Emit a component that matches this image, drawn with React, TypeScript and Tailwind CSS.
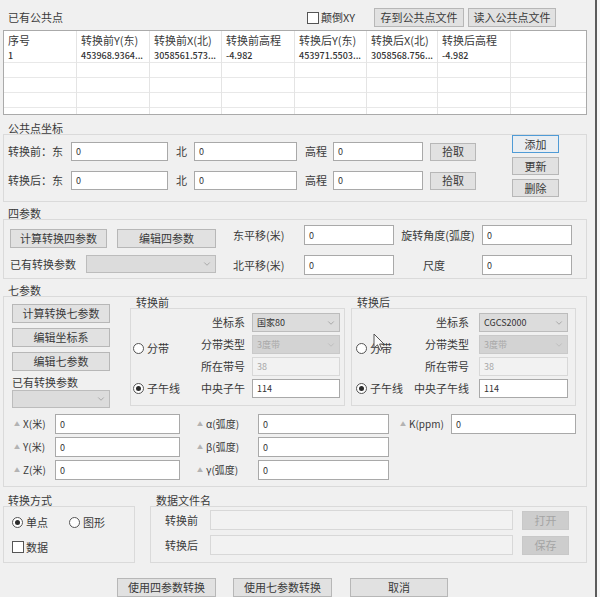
import React from 'react';
import clsx from 'clsx';
import { ChevronDown } from 'lucide-react';

type Kids = { className?: string; children?: React.ReactNode };

function Btn({ className, children, primary, disabled }: Kids & { primary?: boolean; disabled?: boolean }) {
  return (
    <div
      className={clsx(
        'flex shrink-0 items-center justify-center border text-[11px] leading-none',
        primary && 'border-[#4f9bd6] bg-[#eaeef2] text-[#3a3a3a]',
        disabled && 'border-[#c8c8c8] bg-[#cdcdcd] text-[#a4a4a4]',
        !primary && !disabled && 'border-[#b7b7b7] bg-[#e1e1e1] text-[#3a3a3a]',
        className,
      )}
    >
      {children}
    </div>
  );
}

function Field({ className, value = '0', disabled }: { className?: string; value?: string; disabled?: boolean }) {
  return (
    <div
      className={clsx(
        'flex shrink-0 items-center border pl-[4px] text-[9px] leading-none',
        disabled ? 'border-[#d8d8d8] bg-[#f2f2f2] text-[#a9a9a9]' : 'border-[#a9a9a9] bg-white text-[#333]',
        className,
      )}
    >
      {value}
    </div>
  );
}

function Combo({ className, value = '', disabled }: { className?: string; value?: string; disabled?: boolean }) {
  return (
    <div
      className={clsx(
        'flex shrink-0 items-center justify-between border pl-[4px] pr-[3px] text-[9px] leading-none',
        disabled ? 'border-[#c9c9c9] bg-[#d3d3d3] text-[#a8a8a8]' : 'border-[#bcbcbc] bg-[#dcdcdc] text-[#333]',
        className,
      )}
    >
      <span>{value}</span>
      <ChevronDown size={10} strokeWidth={1.5} color={disabled ? '#b0b0b0' : '#8a8a8a'} />
    </div>
  );
}

function Radio({ label, checked, className }: { label: string; checked?: boolean; className?: string }) {
  return (
    <div className={clsx('flex items-center gap-[3px] text-[11px] leading-none', className)}>
      <span className="flex h-[11px] w-[11px] items-center justify-center rounded-full border border-[#555] bg-white">
        {checked && <span className="h-[5px] w-[5px] rounded-full bg-[#2b2b2b]" />}
      </span>
      <span>{label}</span>
    </div>
  );
}

function Check({ label, className }: { label: string; className?: string }) {
  return (
    <div className={clsx('flex items-center gap-[2px] text-[11px] leading-none', className)}>
      <span className="h-[12px] w-[12px] border border-[#555] bg-white" />
      <span>{label}</span>
    </div>
  );
}

function Delta({ children }: Kids) {
  return (
    <span className="flex items-center text-[10px] leading-none">
      <span className="mr-[3px] text-[6px] text-[#b3b3b3]">▲</span>
      {children}
    </span>
  );
}

const COLS = [
  { w: 'w-[73px]', head: '序号', val: '1' },
  { w: 'w-[73px]', head: '转换前Y(东)', val: '453968.9364...' },
  { w: 'w-[72px]', head: '转换前X(北)', val: '3058561.573...' },
  { w: 'w-[73px]', head: '转换前高程', val: '-4.982' },
  { w: 'w-[72px]', head: '转换后Y(东)', val: '453971.5503...' },
  { w: 'w-[71px]', head: '转换后X(北)', val: '3058568.756...' },
  { w: 'w-[73px]', head: '转换后高程', val: '-4.982' },
  { w: 'flex-1', head: '', val: '' },
];

function PointTable() {
  return (
    <div className="ml-[3px] mt-[3px] flex h-[85px] w-[584px] border border-[#aaa] bg-white">
      {COLS.map((c, i) => (
        <div key={i} className={clsx('flex h-full flex-col', c.w, i < COLS.length - 1 && 'border-r border-[#e4e4e4]')}>
          <div className="flex h-[18px] items-center pl-[4px] text-[11px] leading-none">{c.head}</div>
          <div className="flex h-[14px] items-center border-b border-[#e8e8e8] pl-[4px] text-[9px] font-medium leading-none text-[#333]">
            {c.val}
          </div>
          <div className="h-[15px] border-b border-[#e8e8e8]" />
          <div className="h-[15px] border-b border-[#e8e8e8]" />
          <div className="h-[15px] border-b border-[#e8e8e8]" />
        </div>
      ))}
    </div>
  );
}

function GroupLabel({ children, className }: Kids) {
  return <div className={clsx('h-[12px] text-[11px] leading-[12px]', className)}>{children}</div>;
}

function CoordRow({ label }: { label: string }) {
  return (
    <div className="flex h-[19px] items-center text-[11px] leading-none">
      <span className="w-[63px]">{label}</span>
      <Field className="h-[19px] w-[97px]" />
      <span className="w-[26px] pl-[8px]">北</span>
      <Field className="h-[19px] w-[103px]" />
      <span className="w-[36px] pl-[8px]">高程</span>
      <Field className="h-[19px] w-[90px]" />
      <Btn className="ml-[7px] h-[18px] w-[46px]">拾取</Btn>
    </div>
  );
}

function SystemBox({
  title,
  grid,
  labelW,
  className,
  meridian,
  system,
}: {
  title: string;
  grid: string;
  labelW: string;
  className: string;
  meridian: string;
  system: string;
}) {
  const lab = clsx('flex h-[19px] items-center justify-end text-[11px] leading-none', labelW);
  return (
    <div className={className}>
      <div className="h-[11px] pl-[6px] text-[11px] leading-[11px]">{title}</div>
      <div className="h-[98px] border border-[#dadada]">
        <div className={clsx('grid gap-y-[3px] pt-[4px]', grid)}>
          <div />
          <div className={lab}>坐标系</div>
          <Combo className="h-[19px]" value={system} />

          <Radio label="分带" className="self-end" />
          <div className={lab}>分带类型</div>
          <Combo className="h-[19px]" value="3度带" disabled />

          <div />
          <div className={lab}>所在带号</div>
          <Field className="h-[19px]" value="38" disabled />

          <Radio label="子午线" checked className="self-center" />
          <div className={lab}>{meridian}</div>
          <Field className="h-[19px]" value="114" />
        </div>
      </div>
    </div>
  );
}

function Cursor() {
  return (
    <svg className="pointer-events-none absolute left-[373px] top-[333px]" width="14" height="20" viewBox="0 0 14 20">
      <path d="M1 1 L1 15 L4.5 11.8 L7 17.5 L9 16.6 L6.6 11 L11 11 Z" fill="#fafafa" stroke="#555" strokeWidth="1" />
    </svg>
  );
}

export default function App() {
  return (
    <div className="relative flex h-[597px] w-[600px] overflow-hidden bg-[#f7f7f7] font-['Noto_Sans_CJK_SC','Microsoft_YaHei',sans-serif] text-[#3a3a3a]">
      <div className="flex h-full w-[597px] shrink-0 flex-col border-r-[2px] border-[#5c5c5c] bg-[#f0f0f0]">
        {/* 已有公共点 */}
        <div className="mt-[8px] flex h-[19px] items-center">
          <span className="w-[307px] pl-[8px] text-[11px] leading-none">已有公共点</span>
          <Check label="颠倒XY" className="w-[67px]" />
          <Btn className="h-[19px] w-[90px]">存到公共点文件</Btn>
          <Btn className="ml-[4px] h-[19px] w-[88px]">读入公共点文件</Btn>
        </div>
        <PointTable />

        {/* 公共点坐标 */}
        <GroupLabel className="ml-[8px] mt-[7px]">公共点坐标</GroupLabel>
        <div className="ml-[3px] flex h-[68px] w-[584px] border border-[#dadada]">
          <div className="flex flex-col gap-[10px] pl-[4px] pt-[7px]">
            <CoordRow label="转换前：东" />
            <CoordRow label="转换后：东" />
          </div>
          <div className="ml-[36px] flex flex-col gap-[4px] pt-[0px]">
            <Btn primary className="h-[18px] w-[47px]">添加</Btn>
            <Btn className="h-[18px] w-[47px]">更新</Btn>
            <Btn className="h-[18px] w-[47px]">删除</Btn>
          </div>
        </div>

        {/* 四参数 */}
        <GroupLabel className="ml-[8px] mt-[5px]">四参数</GroupLabel>
        <div className="ml-[3px] flex h-[60px] w-[584px] border border-[#dadada]">
          <div className="flex flex-col pl-[6px] pt-[9px]">
            <div className="flex">
              <Btn className="h-[19px] w-[97px]">计算转换四参数</Btn>
              <Btn className="ml-[10px] h-[19px] w-[99px]">编辑四参数</Btn>
            </div>
            <div className="mt-[7px] flex items-center">
              <span className="w-[76px] text-[11px] leading-none">已有转换参数</span>
              <Combo className="h-[18px] w-[130px]" />
            </div>
          </div>
          <div className="ml-[17px] grid grid-cols-[71px_90px_88px_90px] gap-y-[7px] pt-[5px] text-[11px] leading-none">
            <span className="flex h-[20px] items-center">东平移(米)</span>
            <Field className="h-[20px]" />
            <span className="flex h-[20px] items-center justify-center">旋转角度(弧度)</span>
            <Field className="h-[20px]" />
            <span className="flex h-[20px] items-center">北平移(米)</span>
            <Field className="h-[20px]" />
            <span className="flex h-[20px] items-center justify-center pr-[8px]">尺度</span>
            <Field className="h-[20px]" />
          </div>
        </div>

        {/* 七参数 */}
        <GroupLabel className="ml-[8px] mt-[5px]">七参数</GroupLabel>
        <div className="ml-[3px] flex h-[191px] w-[584px] flex-col border border-[#dadada]">
          <div className="flex">
            <div className="ml-[8px] flex w-[98px] flex-col pt-[7px]">
              <div className="flex flex-col gap-[5px]">
                <Btn className="h-[19px] w-[98px]">计算转换七参数</Btn>
                <Btn className="h-[19px] w-[98px]">编辑坐标系</Btn>
                <Btn className="h-[19px] w-[98px]">编辑七参数</Btn>
              </div>
              <div className="mt-[5px] h-[12px] text-[11px] leading-[12px]">已有转换参数</div>
              <Combo className="mt-[2px] h-[18px] w-[98px]" />
            </div>
            <SystemBox
              title="转换前"
              className="ml-[20px] w-[215px]"
              grid="grid-cols-[50px_69px_88px] pl-[2px]"
              labelW="pr-[7px]"
              meridian="中央子午"
              system="国家80"
            />
            <SystemBox
              title="转换后"
              className="ml-[6px] w-[225px]"
              grid="grid-cols-[50px_73px_89px] pl-[4px]"
              labelW="pr-[10px]"
              meridian="中央子午线"
              system="CGCS2000"
            />
          </div>
          <div className="mt-[6px] flex flex-col gap-[3px] pl-[10px]">
            <div className="flex h-[20px] items-center">
              <span className="w-[41px]"><Delta>X(米)</Delta></span>
              <Field className="h-[20px] w-[125px]" />
              <span className="ml-[17px] w-[61px]"><Delta>α(弧度)</Delta></span>
              <Field className="h-[20px] w-[131px]" />
              <span className="ml-[11px] w-[51px]"><Delta>K(ppm)</Delta></span>
              <Field className="h-[20px] w-[125px]" />
            </div>
            <div className="flex h-[20px] items-center">
              <span className="w-[41px]"><Delta>Y(米)</Delta></span>
              <Field className="h-[20px] w-[125px]" />
              <span className="ml-[17px] w-[61px]"><Delta>β(弧度)</Delta></span>
              <Field className="h-[20px] w-[131px]" />
            </div>
            <div className="flex h-[20px] items-center">
              <span className="w-[41px]"><Delta>Z(米)</Delta></span>
              <Field className="h-[20px] w-[125px]" />
              <span className="ml-[17px] w-[61px]"><Delta>γ(弧度)</Delta></span>
              <Field className="h-[20px] w-[131px]" />
            </div>
          </div>
        </div>

        {/* 转换方式 / 数据文件名 */}
        <div className="mt-[7px] flex">
          <div className="ml-[3px] w-[132px]">
            <GroupLabel className="pl-[5px]">转换方式</GroupLabel>
            <div className="h-[57px] border border-[#dadada] pt-[9px]">
              <div className="flex h-[12px] items-center pl-[8px]">
                <Radio label="单点" checked className="w-[57px]" />
                <Radio label="图形" />
              </div>
              <Check label="数据" className="ml-[8px] mt-[13px]" />
            </div>
          </div>
          <div className="ml-[15px] w-[437px]">
            <GroupLabel className="pl-[6px]">数据文件名</GroupLabel>
            <div className="flex h-[57px] flex-col gap-[5px] border border-[#dadada] pt-[3px]">
              <div className="flex items-center">
                <span className="w-[59px] pl-[14px] text-[11px] leading-none">转换前</span>
                <Field className="h-[20px] w-[303px]" value="" disabled />
                <Btn disabled className="ml-[9px] h-[19px] w-[47px]">打开</Btn>
              </div>
              <div className="flex items-center">
                <span className="w-[59px] pl-[14px] text-[11px] leading-none">转换后</span>
                <Field className="h-[20px] w-[303px]" value="" disabled />
                <Btn disabled className="ml-[9px] h-[19px] w-[47px]">保存</Btn>
              </div>
            </div>
          </div>
        </div>

        <div className="mt-[15px] flex">
          <Btn className="ml-[117px] h-[19px] w-[99px]">使用四参数转换</Btn>
          <Btn className="ml-[17px] h-[19px] w-[99px]">使用七参数转换</Btn>
          <Btn className="ml-[18px] h-[19px] w-[98px]">取消</Btn>
        </div>
      </div>
      <Cursor />
    </div>
  );
}
